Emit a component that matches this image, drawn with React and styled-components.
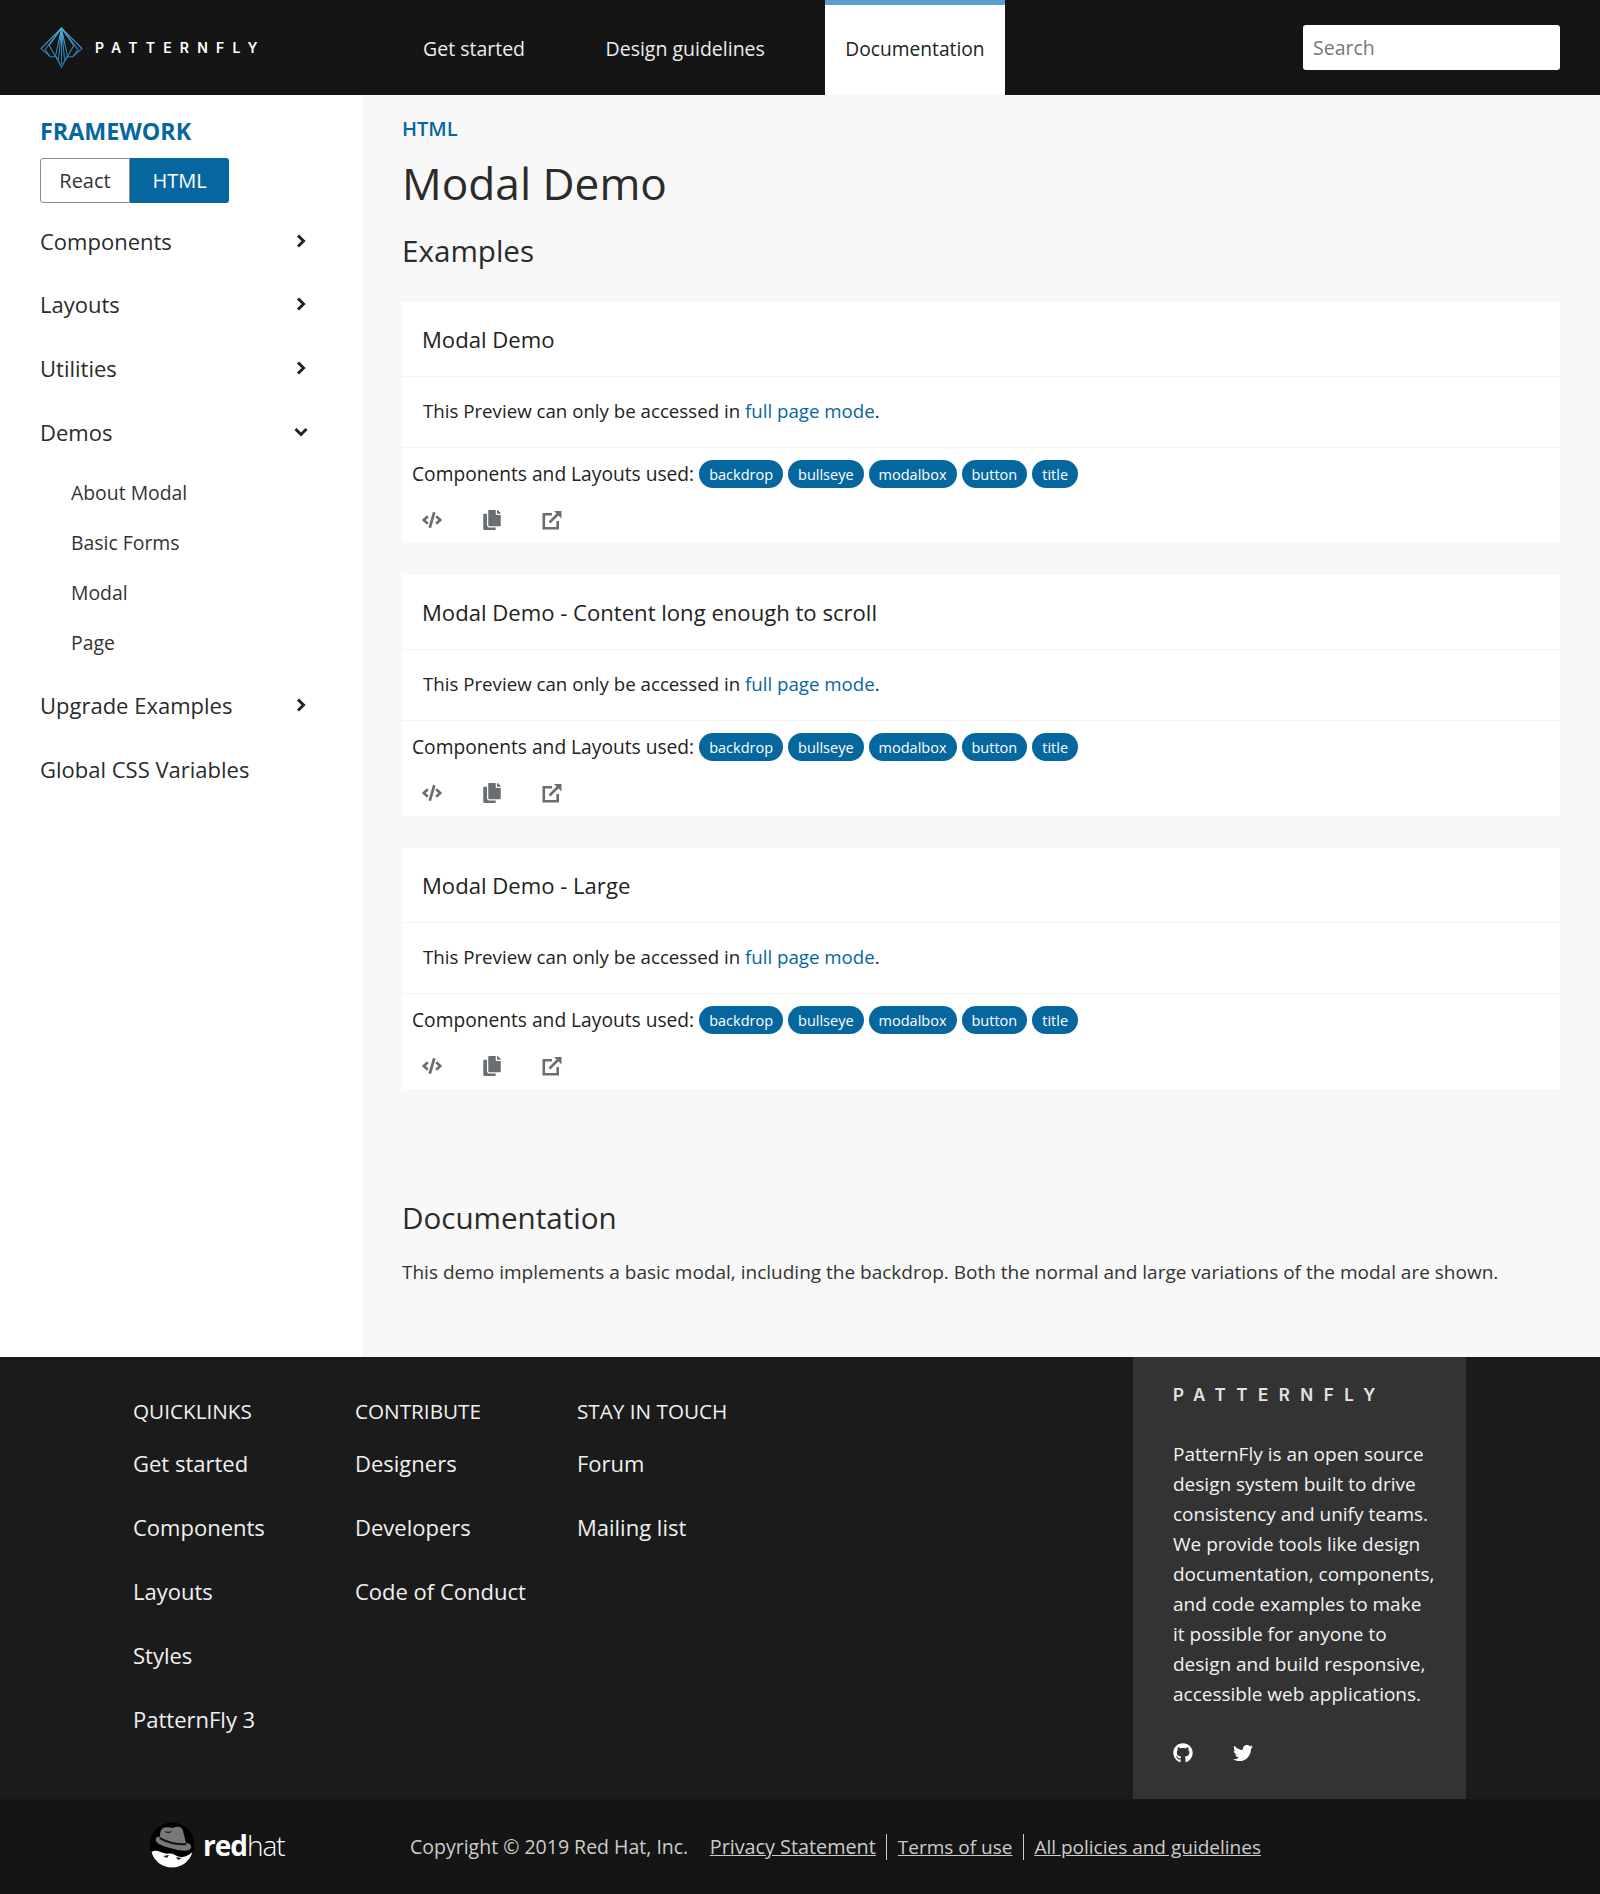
import React from 'react';
import styled, { createGlobalStyle } from 'styled-components';
import { FaCode, FaCopy, FaGithub, FaTwitter } from 'react-icons/fa';

const GlobalStyle = createGlobalStyle`
  html, body { margin: 0; padding: 0; background: #fff; }
  body { font-family: "Open Sans", "Liberation Sans", sans-serif; color: #222; }
  * { box-sizing: border-box; }
`;

const Page = styled.div`
  width: 1600px;
  min-height: 1894px;
  display: flex;
  flex-direction: column;
`;

const Header = styled.header`
  height: 95px;
  background: #151515;
  display: flex;
  align-items: stretch;
  padding: 0 40px;
`;

const Brand = styled.div`
  width: 363px;
  display: flex;
  align-items: center;
  gap: 12px;
  padding-bottom: 1px;
`;

const BrandText = styled.span`
  color: ${p => p.$dim ? '#e4e4e4' : '#fff'};
  font-family: "Inter", sans-serif;
  font-weight: 600;
  font-size: ${p => p.$size || 14}px;
  letter-spacing: ${p => p.$track || 8.2}px;
`;

const TopNav = styled.nav`
  display: flex;
  flex: 1;
  gap: 40.5px;
`;

const TopLink = styled.a`
  display: flex;
  align-items: center;
  padding: 0 20px 3px;
  font-size: ${p => p.$active ? 19.2 : 19.5}px;
  color: ${p => p.$active ? '#222' : '#ededed'};
  background: ${p => p.$active ? '#fff' : 'transparent'};
  border-top: ${p => p.$active ? '5px solid #5a9fd0' : '5px solid transparent'};
`;

const Search = styled.input`
  align-self: center;
  width: 257px;
  height: 45px;
  border: 0;
  border-radius: 3px;
  background: #fff;
  padding: 0 10px;
  font: 19.5px "Open Sans", sans-serif;
  &::placeholder { color: #777; }
`;

const Body = styled.div`
  display: flex;
  height: 1262px;
`;

const Sidebar = styled.aside`
  width: 362px;
  padding: 21px 40px 0;
  background: #fff;
`;

const FrameworkTitle = styled.div`
  color: #06679f;
  font-weight: 700;
  font-size: 23.3px;
  line-height: 30px;
`;

const Toggle = styled.div`
  display: flex;
  width: 189px;
  height: 45px;
  margin: 12px 0 6px;
  font-size: 20px;
`;

const ToggleBtn = styled.div`
  display: flex;
  align-items: center;
  justify-content: center;
  width: ${p => p.$on ? 99 : 90}px;
  color: ${p => p.$on ? '#fff' : '#333'};
  background: ${p => p.$on ? '#06679f' : '#fff'};
  border: ${p => p.$on ? '0' : '1px solid #8a8d90'};
  border-radius: ${p => p.$on ? '0 3px 3px 0' : '3px 0 0 3px'};
`;

const NavRow = styled.div`
  height: 63.6px;
  display: flex;
  align-items: center;
  justify-content: space-between;
  padding-right: 14px;
  font-size: 22px;
  color: #2b2b2b;
`;

const ChevronSvg = styled.svg`
  width: 14px;
  height: 14px;
  fill: none;
  stroke: #222;
  stroke-width: 3;
  transform: rotate(${p => p.$down ? 90 : 0}deg);
`;

const SubList = styled.div`
  padding: 4px 0 6px 31px;
`;

const SubRow = styled.div`
  height: 50px;
  display: flex;
  align-items: center;
  font-size: 19.4px;
  color: #333;
`;

const Main = styled.main`
  flex: 1;
  background: #f8f8f8;
  padding: 20px 40px 0;
`;

const Crumb = styled.div`
  color: #06679f;
  font-weight: 600;
  font-size: 20px;
  line-height: 28px;
`;

const PageTitle = styled.h1`
  margin: 10px 0 0;
  font-weight: 500;
  font-size: 44.2px;
  line-height: 60px;
  color: #2b2b2b;
`;

const SectionTitle = styled.h2`
  margin: ${p => p.$top || 18}px 0 0;
  font-weight: 500;
  font-size: 29.6px;
  line-height: 40px;
  color: #2b2b2b;
`;

const Cards = styled.div`
  margin-top: 31px;
  display: flex;
  flex-direction: column;
  gap: 32px;
`;

const Card = styled.section`
  height: 241px;
  background: #fff;
`;

const CardHead = styled.div`
  height: 75px;
  display: flex;
  align-items: center;
  padding: 0 20px;
  font-weight: 500;
  font-size: 22.1px;
  border-bottom: 1px solid #f5f5f5;
`;

const CardBody = styled.div`
  height: 71px;
  display: flex;
  align-items: center;
  padding: 0 21px 4px;
  font-size: 18.7px;
  border-bottom: 1px solid #f5f5f5;
  white-space: pre;
  a { color: #06679f; }
`;

const UsedRow = styled.div`
  display: flex;
  align-items: center;
  gap: 5px;
  padding: 12px 10px 0;
  font-size: 19.2px;
  line-height: 27px;
`;

const UsedLabel = styled.span`
  position: relative;
  top: -1px;
`;

const Chip = styled.span`
  display: inline-flex;
  align-items: center;
  height: 28px;
  padding: 0 10px;
  border-radius: 14px;
  background: #06679f;
  color: #fff;
  font-size: 14.5px;
`;

const ActionRow = styled.div`
  display: flex;
  gap: 40px;
  padding: 22px 20px 0;
  color: #6a6e73;
  svg { display: block; width: 20px; height: 20px; }
`;

const DocText = styled.p`
  margin: 20px 0 0;
  font-size: 19px;
  line-height: 28px;
  color: #333;
`;

const Footer = styled.footer`
  background: #1b1b1b;
  height: 442px;
  padding: 0 134px 0 133px;
  display: flex;
  justify-content: space-between;
  color: #f0f0f0;
`;

const FootCols = styled.div`
  display: flex;
  padding-top: 41px;
`;

const FootCol = styled.div`
  width: 222px;
`;

const FootHead = styled.div`
  font-size: 20.7px;
  line-height: 26px;
  margin-bottom: 7px;
`;

const FootLink = styled.div`
  height: 64px;
  display: flex;
  align-items: center;
  font-size: 22px;
`;

const AboutPanel = styled.div`
  width: 333px;
  background: #333;
  padding: 27px 30px 0 40px;
`;

const AboutText = styled.p`
  margin: 33px 0 0;
  font-size: 19px;
  line-height: 30px;
  color: #f2f2f2;
`;

const Social = styled.div`
  display: flex;
  gap: 40px;
  margin-top: 34px;
  color: #fff;
  svg { display: block; width: 20px; height: 20px; }
`;

const BottomBar = styled.div`
  flex: 1;
  background: #151515;
  height: 95px;
  display: flex;
  align-items: center;
  padding-left: 149px;
  color: #ccc;
  font-size: 19.5px;
`;

const RedHat = styled.div`
  width: 261px;
  display: flex;
  align-items: center;
  gap: 8px;
  padding-bottom: 4px;
`;

const RedHatWord = styled.span`
  color: #fff;
  font-size: 28px;
  letter-spacing: -1px;
  font-weight: 700;
  b { font-weight: 300; }
`;

const Legal = styled.a`
  color: #ccc;
  text-decoration: underline;
  padding: 0 10.5px;
  font-size: ${p => p.$first ? 19.8 : 19}px;
  border-left: ${p => p.$first ? '0' : '1px solid #ccc'};
  margin-left: ${p => p.$first ? '11px' : '0'};
`;

function Chevron({ down }) {
  return (
    <ChevronSvg $down={down} viewBox="0 0 14 14">
      <path d="M4 1.5 L9.5 7 L4 12.5" />
    </ChevronSvg>
  );
}

function PfLogo() {
  return (
    <svg width="43" height="41" viewBox="0 0 42 40" fill="none" stroke="url(#pfFade)" strokeWidth="1">
      <defs>
        <linearGradient id="pfFade" x1="0" y1="0" x2="0" y2="1">
          <stop offset="0" stopColor="#55aee0" />
          <stop offset="1" stopColor="#1f73a8" />
        </linearGradient>
      </defs>
      <path d="M21 1 L41 21 L32 29 L26 29 L21 39 L16 29 L10 29 L1 21 Z" />
      <path d="M21 1 L9 18 L21 39 L33 18 Z" />
      <path d="M21 1 L15 29 M21 1 L27 29 M21 1 V36 M21 1 L18 32 M21 1 L24 32 M21 1 L5 22 L10 29 M21 1 L37 22 L32 29" />
    </svg>
  );
}

function RedHatMark() {
  return (
    <svg width="46" height="46" viewBox="0 0 46 46">
      <circle cx="23" cy="23" r="22.5" fill="#000" />
      <path d="M2.5 30 C7 27 11 30 15 31 C17 33 21 30 26 33 C31 36 37 36 43.5 30 C41 39 33 45.5 23 45.5 C13 45.5 5 39 2.5 30 Z" fill="#fff" />
      <path d="M14 34 L20 33 L18 36 Z M27 35 L33 36 L29 38 Z" fill="#222" />
      <path d="M13 7 C17 4 21 6 24 6 C28 4 33 4 34 9 C35 13 36 17 37 21 C41 21 43 24 42 26 C40 30 31 29 25 27 C17 25 9 23 7 19 C6 16 8 14 11 15 C11 12 11 9 13 7 Z" fill="#77787a" />
      <path d="M11 15 C18 19 28 22 37 21 L37.5 23 C28 24 17 21 10.5 17 Z" fill="#111" />
      <path d="M15 9 C18 10 20 10 23 9 C21 12 18 12 15 9 Z" fill="#222" />
    </svg>
  );
}

function ShareIcon() {
  return (
    <svg viewBox="0 0 20 20" fill="none" stroke="currentColor" strokeWidth="2.6">
      <path d="M10 4.3 H1.8 V18.2 H15.7 V11" />
      <path d="M7.5 12.5 L16 4" />
      <path d="M12 1 H19.5 V8.5 Z" fill="currentColor" stroke="none" />
    </svg>
  );
}

const chips = ['backdrop', 'bullseye', 'modalbox', 'button', 'title'];
const cards = ['Modal Demo', 'Modal Demo - Content long enough to scroll', 'Modal Demo - Large'];
const footer = [
  ['QUICKLINKS', ['Get started', 'Components', 'Layouts', 'Styles', 'PatternFly 3']],
  ['CONTRIBUTE', ['Designers', 'Developers', 'Code of Conduct']],
  ['STAY IN TOUCH', ['Forum', 'Mailing list']],
];

export default function App() {
  return (
    <Page>
      <GlobalStyle />
      <Header>
        <Brand>
          <PfLogo />
          <BrandText>PATTERNFLY</BrandText>
        </Brand>
        <TopNav>
          <TopLink>Get started</TopLink>
          <TopLink>Design guidelines</TopLink>
          <TopLink $active>Documentation</TopLink>
        </TopNav>
        <Search placeholder="Search" />
      </Header>
      <Body>
        <Sidebar>
          <FrameworkTitle>FRAMEWORK</FrameworkTitle>
          <Toggle>
            <ToggleBtn>React</ToggleBtn>
            <ToggleBtn $on>HTML</ToggleBtn>
          </Toggle>
          <NavRow>Components <Chevron /></NavRow>
          <NavRow>Layouts <Chevron /></NavRow>
          <NavRow>Utilities <Chevron /></NavRow>
          <NavRow>Demos <Chevron down /></NavRow>
          <SubList>
            <SubRow>About Modal</SubRow>
            <SubRow>Basic Forms</SubRow>
            <SubRow>Modal</SubRow>
            <SubRow>Page</SubRow>
          </SubList>
          <NavRow>Upgrade Examples <Chevron /></NavRow>
          <NavRow>Global CSS Variables</NavRow>
        </Sidebar>
        <Main>
          <Crumb>HTML</Crumb>
          <PageTitle>Modal Demo</PageTitle>
          <SectionTitle>Examples</SectionTitle>
          <Cards>
            {cards.map(title => (
              <Card key={title}>
                <CardHead>{title}</CardHead>
                <CardBody>This Preview can only be accessed in <a>full page mode</a>.</CardBody>
                <UsedRow>
                  <UsedLabel>Components and Layouts used:</UsedLabel>
                  {chips.map(c => <Chip key={c}>{c}</Chip>)}
                </UsedRow>
                <ActionRow>
                  <FaCode />
                  <FaCopy />
                  <ShareIcon />
                </ActionRow>
              </Card>
            ))}
          </Cards>
          <SectionTitle $top={109}>Documentation</SectionTitle>
          <DocText>This demo implements a basic modal, including the backdrop. Both the normal and large variations of the modal are shown.</DocText>
        </Main>
      </Body>
      <Footer>
        <FootCols>
          {footer.map(([head, links]) => (
            <FootCol key={head}>
              <FootHead>{head}</FootHead>
              {links.map(l => <FootLink key={l}>{l}</FootLink>)}
            </FootCol>
          ))}
        </FootCols>
        <AboutPanel>
          <BrandText $dim $size={17} $track={10.5}>PATTERNFLY</BrandText>
          <AboutText>
            PatternFly is an open source design system built to drive consistency and unify teams. We provide tools like design documentation, components, and code examples to make it possible for anyone to design and build responsive, accessible web applications.
          </AboutText>
          <Social>
            <FaGithub />
            <FaTwitter />
          </Social>
        </AboutPanel>
      </Footer>
      <BottomBar>
        <RedHat>
          <RedHatMark />
          <RedHatWord>red<b>hat</b></RedHatWord>
        </RedHat>
        <span>Copyright © 2019 Red Hat, Inc.</span>
        <Legal $first>Privacy Statement</Legal>
        <Legal>Terms of use</Legal>
        <Legal>All policies and guidelines</Legal>
      </BottomBar>
    </Page>
  );
}
